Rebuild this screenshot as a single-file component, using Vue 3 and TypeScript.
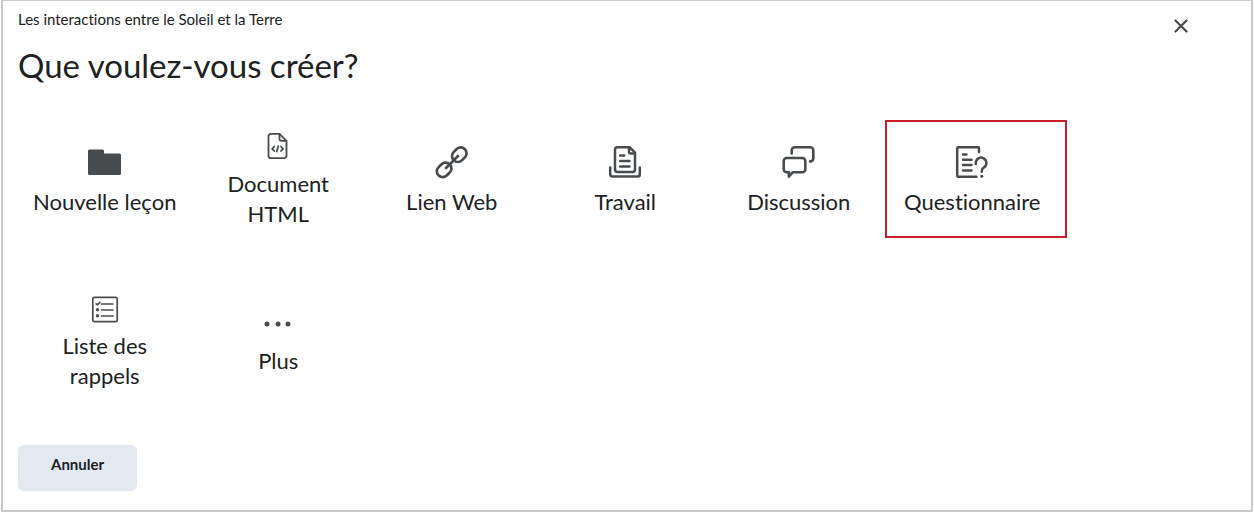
<script setup lang="ts">
interface Tile {
  id: string
  label: string
  size: 'regular' | 'small'
  highlighted?: boolean
}

const tiles: Tile[] = [
  { id: 'lesson', label: 'Nouvelle leçon', size: 'regular' },
  { id: 'html', label: 'Document HTML', size: 'small' },
  { id: 'link', label: 'Lien Web', size: 'regular' },
  { id: 'assignment', label: 'Travail', size: 'regular' },
  { id: 'discussion', label: 'Discussion', size: 'regular' },
  { id: 'quiz', label: 'Questionnaire', size: 'regular', highlighted: true },
  { id: 'checklist', label: 'Liste des rappels', size: 'small' },
  { id: 'more', label: 'Plus', size: 'small' },
]
</script>

<template>
  <main class="dialog" role="dialog" aria-labelledby="dialog-title">
    <header class="header">
      <div>
        <p class="context">Les interactions entre le Soleil et la Terre</p>
        <h1 id="dialog-title" class="title">Que voulez-vous créer?</h1>
      </div>
      <button class="close" type="button" aria-label="Fermer">
        <svg width="14" height="14" viewBox="0 0 14 14" fill="none" stroke="currentColor" stroke-width="2.2" stroke-linecap="round">
          <path d="M1.5 1.5l11 11M12.5 1.5l-11 11" />
        </svg>
      </button>
    </header>

    <div class="grid">
      <button v-for="tile in tiles" :key="tile.id" type="button" class="tile">
        <span class="icon" :class="tile.size">
          <svg v-if="tile.id === 'lesson'" width="36" height="36" viewBox="0 0 36 36" fill="currentColor">
            <path d="M2.500 5.500h13a1.500 1.500 0 0 1 1.500 1.500V9.500h15.500a1.500 1.500 0 0 1 1.500 1.500v18.500a1.500 1.500 0 0 1-1.500 1.500h-30a1.500 1.500 0 0 1-1.500-1.500v-22.500A1.500 1.500 0 0 1 2.500 5.500z" />
          </svg>
          <svg v-else-if="tile.id === 'html'" width="30" height="30" viewBox="0 1 30 30" fill="none" stroke="currentColor" stroke-width="1.8" stroke-linejoin="round" stroke-linecap="round">
            <path d="M8 2.800H16.500L23.500 9.800V24.700a2.500 2.500 0 0 1-2.500 2.500h-13A2.500 2.500 0 0 1 5.500 24.700V5.300a2.500 2.500 0 0 1 2.500-2.500z" />
            <path d="M16.500 3v4.800a2 2 0 0 0 2 2h4.800" />
            <path d="M11.200 15.500L9.200 17.800l2 2.200M18 15.500l2 2.300-2 2.200M15.300 15l-1.600 5.500" />
          </svg>
          <svg v-else-if="tile.id === 'link'" width="36" height="36" viewBox="0 0 36 36" fill="none" stroke="currentColor" stroke-width="2.700" stroke-linecap="round">
            <rect x="-7.800" y="-5.800" width="15.600" height="11.600" rx="5.600" transform="translate(25.300 10.700) rotate(-45)" />
            <rect x="-7.800" y="-5.800" width="15.600" height="11.600" rx="5.600" transform="translate(10.100 25.900) rotate(-45)" />
            <path d="M12 24L24 12" />
          </svg>
          <svg v-else-if="tile.id === 'assignment'" width="36" height="36" viewBox="0 0 36 36" fill="none" stroke="currentColor" stroke-width="2.500" stroke-linecap="round" stroke-linejoin="round">
            <path d="M10.500 3.200H22.500L28 8.700V25.500a2.500 2.500 0 0 1-2.500 2.500h-15A2.500 2.500 0 0 1 8 25.500V5.700a2.500 2.500 0 0 1 2.500-2.500z" />
            <path d="M22 3.500V7.500a2 2 0 0 0 2 2h3.800" />
            <path d="M13.200 11.500h4M13.200 17h9.300M13.200 22.500h9.300" />
            <path d="M3.200 23.500v7a2 2 0 0 0 2 2h25.600a2 2 0 0 0 2-2v-7" />
          </svg>
          <svg v-else-if="tile.id === 'discussion'" width="36" height="36" viewBox="0 0 36 36" fill="none" stroke="currentColor" stroke-width="2.600" stroke-linecap="round" stroke-linejoin="round">
            <path d="M10.700 9.500V6.200a3 3 0 0 1 3-3h15.600a3 3 0 0 1 3 3v8.200a3 3 0 0 1-3 3h-.3" />
            <path d="M5.700 14h15.600a3 3 0 0 1 3 3v8.300a3 3 0 0 1-3 3h-9.600L7.800 32.500V28.300H5.700a3 3 0 0 1-3-3V17a3 3 0 0 1 3-3z" />
          </svg>
          <svg v-else-if="tile.id === 'quiz'" width="36" height="36" viewBox="0 0 36 36" fill="none" stroke="currentColor" stroke-width="2.500" stroke-linecap="round" stroke-linejoin="round">
            <path d="M25 8V4.200a1 1 0 0 0-1-1H4.200a1 1 0 0 0-1 1V31.700a1 1 0 0 0 1 1H22.500" />
            <path d="M9 10.500h3.500M9 15.700h8.500M9 21h8.500M9 26.500h8.500" />
            <path d="M21.800 20v-1a5.300 5.300 0 1 1 8.200 4.400c-1.700 1.100-2.200 1.700-2.200 3.300v1" />
            <circle cx="27.800" cy="32.200" r="1.500" fill="currentColor" stroke="none" />
          </svg>
          <svg v-else-if="tile.id === 'checklist'" width="30" height="30" viewBox="0 0 30 30" fill="none" stroke="currentColor" stroke-width="1.700" stroke-linecap="round" stroke-linejoin="round">
            <rect x="2.800" y="3.300" width="24.400" height="24.400" rx="1.500" />
            <path d="M11.500 10h11.500M11.500 16h11.500M11.500 22h11.500" />
            <path d="M6.200 9.800l1.200 1 2.400-2.400" />
            <circle cx="7.500" cy="15.700" r="1.700" fill="currentColor" stroke="none" />
            <circle cx="7.500" cy="21.700" r="1.700" fill="currentColor" stroke="none" />
          </svg>
          <svg v-else width="30" height="30" viewBox="0 0 30 30" fill="currentColor">
            <circle cx="4" cy="15" r="2.500" />
            <circle cx="15" cy="15" r="2.500" />
            <circle cx="25" cy="15" r="2.500" />
          </svg>
        </span>
        <span class="label">{{ tile.label }}</span>
        <span v-if="tile.highlighted" class="highlight" aria-hidden="true"></span>
      </button>
    </div>

    <footer>
      <button class="cancel" type="button">Annuler</button>
    </footer>
  </main>
</template>

<style>
body {
  margin: 0;
  background: #fff;
}
</style>

<style scoped>
.dialog {
  box-sizing: border-box;
  min-height: 100vh;
  margin: 0 1px;
  padding: 7px 14px 16px 15px;
  border: 2px solid #cacaca;
  border-top-width: 1px;
  background: #fff;
  color: #202122;
  font-family: Lato, "Liberation Sans", sans-serif;
  font-variant-ligatures: none;
}

button {
  margin: 0;
  border: 0;
  font: inherit;
  color: inherit;
  cursor: pointer;
}

.header {
  display: flex;
  justify-content: space-between;
  align-items: flex-start;
}

.context {
  margin: 0;
  font-size: 15px;
  line-height: 22px;
}

.title {
  margin: 13px 0 0;
  font-size: 33px;
  font-weight: 400;
  line-height: 44px;
}

.close {
  display: grid;
  place-items: center;
  width: 30px;
  height: 30px;
  margin: 3px 41px 0 0;
  padding: 0;
  background: none;
  color: #494c4e;
}

.grid {
  display: grid;
  grid-template-columns: repeat(6, minmax(0, 1fr));
  grid-auto-rows: minmax(162px, auto);
  margin: 12px 178px 0 0;
}

.tile {
  position: relative;
  display: flex;
  flex-direction: column;
  align-items: center;
  justify-content: center;
  gap: 7px;
  padding: 0 8px;
  background: none;
}

.icon {
  display: block;
  color: #494c4e;
}

.icon svg {
  display: block;
}

.regular {
  height: 36px;
}

.small {
  height: 30px;
}

.label {
  font-size: 22px;
  line-height: 30px;
  text-align: center;
}

.highlight {
  position: absolute;
  inset: 21px -8px 23px -1px;
  border: 2px solid #c8202a;
  pointer-events: none;
}

.cancel {
  margin-top: 22px;
  padding: 8px 33px 16px;
  border-radius: 6px;
  background: #e3e9f1;
  font-size: 15px;
  font-weight: 700;
  line-height: 22px;
}
</style>
